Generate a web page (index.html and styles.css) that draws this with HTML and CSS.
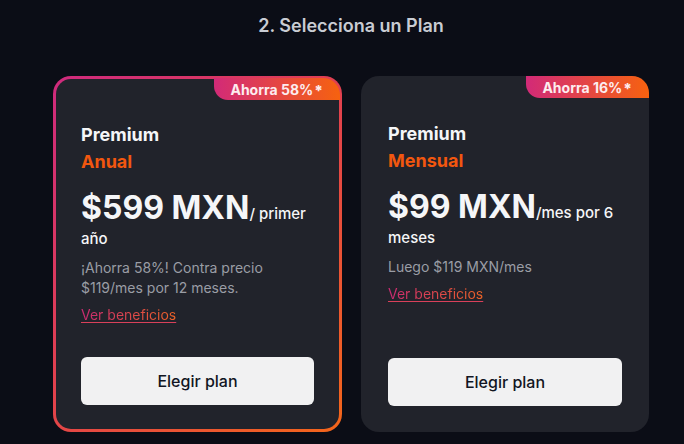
FILE: index.html
```html
<!DOCTYPE html>
<html lang="es">
<head>
<meta charset="utf-8">
<title>Selecciona un Plan</title>
<link rel="stylesheet" href="styles.css">
</head>
<body>
<main class="page">
  <h2 class="section-title">2. Selecciona un Plan</h2>
  <div class="plans">
    <article class="card card--featured">
      <span class="badge">Ahorra 58%<span class="star">*</span></span>
      <p class="plan-name">Premium</p>
      <p class="plan-period">Anual</p>
      <p class="price"><span class="amount">$599 MXN</span><span class="per">/ primer</span> <span class="per">año</span></p>
      <p class="note">¡Ahorra 58%! Contra precio $119/mes por 12 meses.</p>
      <p class="link-row"><a class="benefits" href="#">Ver beneficios</a></p>
      <button class="choose" type="button">Elegir plan</button>
    </article>
    <article class="card card--plain">
      <span class="badge">Ahorra 16%<span class="star">*</span></span>
      <p class="plan-name">Premium</p>
      <p class="plan-period">Mensual</p>
      <p class="price"><span class="amount">$99 MXN</span><span class="per">/mes por 6</span> <span class="per">meses</span></p>
      <p class="note">Luego $119 MXN/mes</p>
      <p class="link-row"><a class="benefits" href="#">Ver beneficios</a></p>
      <button class="choose" type="button">Elegir plan</button>
    </article>
  </div>
</main>
</body>
</html>
```

FILE: styles.css
```css
* { box-sizing: border-box; }

html, body {
  margin: 0;
  background: #0b0d16;
}

body {
  font-family: Inter, "Noto Sans", "Liberation Sans", sans-serif;
  color: #ffffff;
  overflow: hidden;
}

.page {
  width: 596px;
  margin-left: 53px;
  padding-top: 12px;
}

.section-title {
  margin: 0 0 37px;
  text-align: center;
  font-size: 18px;
  line-height: 27px;
  font-weight: 600;
  color: #c9ccd3;
}

.plans {
  display: grid;
  grid-template-columns: 289px 288px;
  column-gap: 19px;
}

.card {
  position: relative;
  display: flex;
  flex-direction: column;
  align-items: flex-start;
  min-height: 356px;
  border-radius: 18px;
  background: #21232b;
  padding: 42px 25px 24px;
}

.card--featured {
  border: 3px solid transparent;
  background:
    linear-gradient(#21232b, #21232b) padding-box,
    linear-gradient(135deg, #cf2a7e 0%, #e2424c 50%, #f4661a 100%) border-box;
}

.card--plain {
  border: 2px solid transparent;
}

.badge {
  position: absolute;
  top: -2px;
  right: -2px;
  height: 22px;
  padding: 0 17px 0 16px;
  display: flex;
  align-items: center;
  font-size: 14px;
  font-weight: 700;
  color: #fdecef;
  background: linear-gradient(90deg, #d22a78 0%, #f6620f 100%);
  border-radius: 0 17px 0 14px;
}

.card--featured .badge {
  top: -1px;
  right: -1px;
}

.star {
  margin-left: 1px;
  font-size: 15px;
  font-weight: 800;
  position: relative;
  top: 1px;
}

.plan-name,
.plan-period {
  margin: 0;
  font-size: 18px;
  line-height: 27px;
  font-weight: 700;
}

.plan-name {
  color: #f5f6f8;
}

.plan-period {
  color: #f2570f;
}

.price {
  margin: 17px 0 0;
  font-size: 15px;
  line-height: 25px;
  font-weight: 500;
  color: #f5f6f8;
}

.amount {
  font-size: 32px;
  line-height: 1;
  font-weight: 700;
}

.note {
  margin: 7px 0 0;
  font-size: 14px;
  line-height: 20px;
  color: #9a9da5;
}

.link-row {
  margin: 7px 0 0;
  font-size: 14px;
  line-height: 20px;
}

.benefits {
  color: #d9405a;
  background: linear-gradient(90deg, #c92a72 0%, #ec6226 100%);
  -webkit-background-clip: text;
  background-clip: text;
  -webkit-text-fill-color: transparent;
  text-decoration: underline;
  text-decoration-color: #d9405a;
  text-underline-offset: 2px;
}

.choose {
  margin-top: auto;
  width: 100%;
  height: 48px;
  border: 0;
  border-radius: 6px;
  background: #f1f1f2;
  color: #111522;
  font-family: inherit;
  font-size: 16px;
  font-weight: 500;
  cursor: pointer;
}
```
